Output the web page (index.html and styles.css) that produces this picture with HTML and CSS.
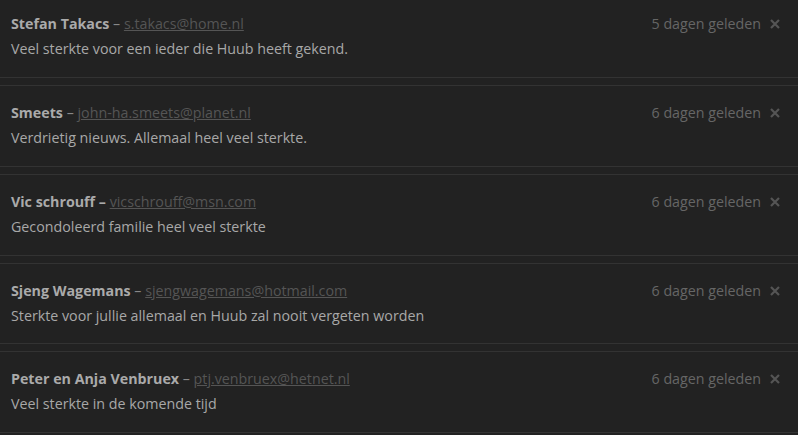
FILE: index.html
```html
<!DOCTYPE html>
<html lang="nl">
<head>
  <meta charset="UTF-8">
  <title>Condoleances</title>
  <link rel="stylesheet" href="styles.css">
</head>
<body>
  <div class="comments">
    <div class="comment">
      <div class="comment-head">
        <div class="author"><strong>Stefan Takacs</strong> – <a href="#">s.takacs@home.nl</a></div>
        <div class="meta">5 dagen geleden <svg class="close" viewBox="0 0 10 10"><path d="M1 1L9 9M9 1L1 9"/></svg></div>
      </div>
      <p class="text">Veel sterkte voor een ieder die Huub heeft gekend.</p>
    </div>
    <div class="comment">
      <div class="comment-head">
        <div class="author"><strong>Smeets</strong> – <a href="#">john-ha.smeets@planet.nl</a></div>
        <div class="meta">6 dagen geleden <svg class="close" viewBox="0 0 10 10"><path d="M1 1L9 9M9 1L1 9"/></svg></div>
      </div>
      <p class="text">Verdrietig nieuws. Allemaal heel veel sterkte.</p>
    </div>
    <div class="comment">
      <div class="comment-head">
        <div class="author"><strong>Vic schrouff –</strong> <a href="#">vicschrouff@msn.com</a></div>
        <div class="meta">6 dagen geleden <svg class="close" viewBox="0 0 10 10"><path d="M1 1L9 9M9 1L1 9"/></svg></div>
      </div>
      <p class="text">Gecondoleerd familie heel veel sterkte</p>
    </div>
    <div class="comment">
      <div class="comment-head">
        <div class="author"><strong>Sjeng Wagemans</strong> – <a href="#">sjengwagemans@hotmail.com</a></div>
        <div class="meta">6 dagen geleden <svg class="close" viewBox="0 0 10 10"><path d="M1 1L9 9M9 1L1 9"/></svg></div>
      </div>
      <p class="text">Sterkte voor jullie allemaal en Huub zal nooit vergeten worden</p>
    </div>
    <div class="comment">
      <div class="comment-head">
        <div class="author"><strong>Peter en Anja Venbruex</strong> – <a href="#">ptj.venbruex@hetnet.nl</a></div>
        <div class="meta">6 dagen geleden <svg class="close" viewBox="0 0 10 10"><path d="M1 1L9 9M9 1L1 9"/></svg></div>
      </div>
      <p class="text">Veel sterkte in de komende tijd</p>
    </div>
  </div>
</body>
</html>
```
FILE: styles.css
```css
body {
  margin: 0;
  background: #222;
  color: #a8a8a8;
  font-family: 'Open Sans', 'Liberation Sans', sans-serif;
  font-size: 14.25px;
  line-height: 20px;
  overflow: hidden;
}

.comments {
  margin-top: -3.75px;
}

.comment {
  border-top: 1px solid #333;
  border-bottom: 1px solid #333;
  padding: 17px 18px 17.75px 11px;
  margin-bottom: 7px;
}

.comment-head {
  display: flex;
  justify-content: space-between;
}

.author {
  color: #888;
}

.author strong {
  color: #aaa;
}

.author a {
  color: #555;
}

.meta {
  color: #666;
  display: flex;
  align-items: center;
}

.close {
  width: 10px;
  height: 10px;
  margin-left: 9px;
  stroke: #555;
  stroke-width: 2.2;
  fill: none;
}

.text {
  margin: 5px 0 0;
}
```
